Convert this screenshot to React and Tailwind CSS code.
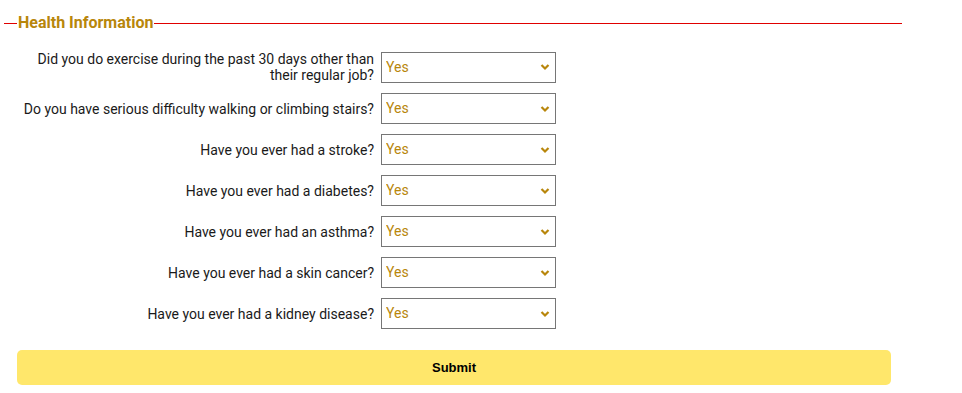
import React, { useState } from 'react'

const questions = [
  { key: 'exercise', label: 'Did you do exercise during the past 30 days other than their regular job?' },
  { key: 'walking', label: 'Do you have serious difficulty walking or climbing stairs?' },
  { key: 'stroke', label: 'Have you ever had a stroke?' },
  { key: 'diabetes', label: 'Have you ever had a diabetes?' },
  { key: 'asthma', label: 'Have you ever had an asthma?' },
  { key: 'skinCancer', label: 'Have you ever had a skin cancer?' },
  { key: 'kidney', label: 'Have you ever had a kidney disease?' },
]

const Chevron = () => (
  <svg
    className="absolute right-[6px] top-1/2 -translate-y-1/2 pointer-events-none"
    width="10"
    height="7"
    viewBox="0 0 10 7"
  >
    <polyline points="1.5,1.5 5,5 8.5,1.5" fill="none" stroke="#b8860b" strokeWidth="2.2" />
  </svg>
)

const App = () => {
  const [form, setForm] = useState(
    Object.fromEntries(questions.map((q) => [q.key, 'Yes']))
  )

  const handleSubmit = (e) => {
    e.preventDefault()
    // console.log(form)
  }

  return (
    <div className="w-full min-h-screen bg-white font-['Roboto',sans-serif] pt-[13px]">
      <form onSubmit={handleSubmit} className="w-[898px] ml-[4px]">
        {/* Title */}
        <div className="flex items-center">
          <div className="w-[13px] h-px bg-[#e00000]" />
          <h2 className="px-px text-[16px] font-bold text-[#b8860b] leading-[20px]">
            Health Information
          </h2>
          <div className="flex-1 h-px bg-[#e00000]" />
        </div>

        {/* Questions */}
        <div className="flex flex-col gap-[10px] pt-[18px] pl-[10px]">
          {questions.map((q) => (
            <div key={q.key} className="flex items-center">
              <label className="w-[360px] text-right text-[14px] leading-[16px] text-[#1a1a1a]">
                {q.label}
              </label>
              <div className="relative ml-[7px] w-[175px]">
                <select
                  value={form[q.key]}
                  onChange={(e) => setForm({ ...form, [q.key]: e.target.value })}
                  className="appearance-none w-full h-[31px] border border-[#767676] bg-white pl-[4px] text-[14px] text-[#b8860b] outline-none"
                >
                  <option value="Yes">Yes</option>
                  <option value="No">No</option>
                </select>
                <Chevron />
              </div>
            </div>
          ))}
        </div>

        {/* Button */}
        <button
          type="submit"
          className="mt-[21px] ml-[13px] w-[874px] h-[35px] rounded-[5px] bg-[#ffe76b] font-['Liberation_Sans',Arial,sans-serif] text-[13px] font-bold text-black cursor-pointer"
        >
          Submit
        </button>
      </form>
    </div>
  )
}

export default App
